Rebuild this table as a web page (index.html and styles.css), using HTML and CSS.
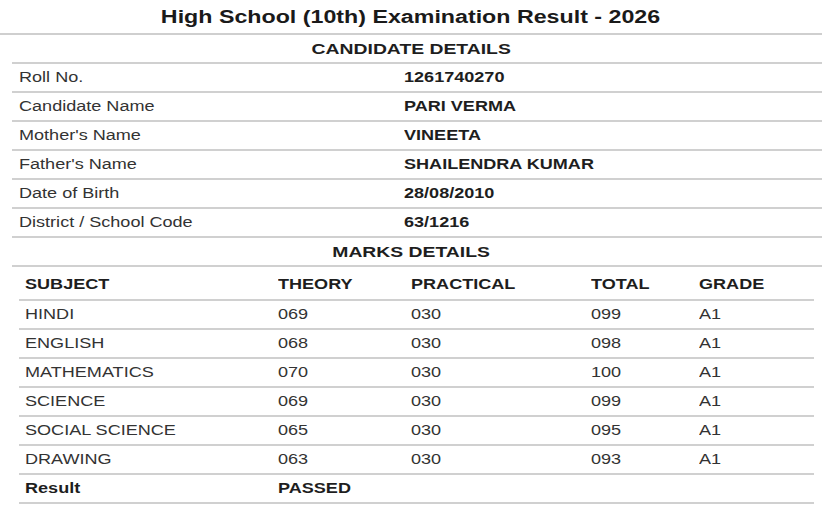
FILE: index.html
```html
<!DOCTYPE html>
<html>
<head>
<meta charset="utf-8">
<link rel="stylesheet" href="styles.css">
</head>
<body>
<h1 class="title"><span class="wide-c">High School (10th) Examination Result - 2026</span></h1>
<section class="cand">
  <div class="sec-head"><span class="wide-c">CANDIDATE DETAILS</span></div>
  <div class="crow"><span class="lbl">Roll No.</span><span class="val">1261740270</span></div>
  <div class="crow"><span class="lbl">Candidate Name</span><span class="val">PARI VERMA</span></div>
  <div class="crow"><span class="lbl">Mother's Name</span><span class="val">VINEETA</span></div>
  <div class="crow"><span class="lbl">Father's Name</span><span class="val">SHAILENDRA KUMAR</span></div>
  <div class="crow"><span class="lbl">Date of Birth</span><span class="val">28/08/2010</span></div>
  <div class="crow"><span class="lbl">District / School Code</span><span class="val">63/1216</span></div>
  <div class="sec-head"><span class="wide-c">MARKS DETAILS</span></div>
</section>
<section class="marks">
  <div class="mrow mhead"><span>SUBJECT</span><span>THEORY</span><span>PRACTICAL</span><span>TOTAL</span><span>GRADE</span></div>
  <div class="mrow"><span>HINDI</span><span>069</span><span>030</span><span>099</span><span>A1</span></div>
  <div class="mrow"><span>ENGLISH</span><span>068</span><span>030</span><span>098</span><span>A1</span></div>
  <div class="mrow"><span>MATHEMATICS</span><span>070</span><span>030</span><span>100</span><span>A1</span></div>
  <div class="mrow"><span>SCIENCE</span><span>069</span><span>030</span><span>099</span><span>A1</span></div>
  <div class="mrow"><span>SOCIAL SCIENCE</span><span>065</span><span>030</span><span>095</span><span>A1</span></div>
  <div class="mrow"><span>DRAWING</span><span>063</span><span>030</span><span>093</span><span>A1</span></div>
  <div class="mrow mresult"><span>Result</span><span>PASSED</span></div>
</section>
</body>
</html>
```

FILE: styles.css
```css
html, body {
  margin: 0;
  padding: 0;
  background: #ffffff;
}
body {
  font-family: "Liberation Sans", Arial, sans-serif;
  color: #262626;
  width: 822px;
  height: 508px;
  overflow: hidden;
}
.wide-c {
  display: inline-block;
  transform: scaleX(1.29);
  transform-origin: center;
}
.title {
  margin: 0;
  height: 33px;
  line-height: 34px;
  font-size: 18px;
  font-weight: bold;
  text-align: center;
  color: #1a1a1a;
  border-bottom: 2px solid #cfcfcf;
}
.cand {
  margin-left: 12px;
}
.sec-head {
  height: 27px;
  line-height: 27px;
  text-align: center;
  font-size: 15px;
  font-weight: bold;
  color: #1e1e1e;
  border-bottom: 2px solid #d0d0d0;
  padding-right: 12px;
}
.crow {
  display: grid;
  grid-template-columns: 385px 1fr;
  height: 27px;
  line-height: 27px;
  padding-left: 7px;
  font-size: 14px;
  border-bottom: 2px solid #d0d0d0;
}
.crow span,
.mrow span {
  justify-self: start;
  transform: scaleX(1.29);
  transform-origin: left center;
  white-space: nowrap;
}
.crow .lbl {
  color: #333333;
}
.crow .val {
  font-weight: bold;
  color: #1e1e1e;
}
.marks {
  margin-left: 19px;
  margin-right: 8px;
}
.mrow {
  display: grid;
  grid-template-columns: 253px 133px 180px 108px 1fr;
  height: 27px;
  line-height: 27px;
  padding-left: 6px;
  font-size: 14px;
  color: #333333;
  border-bottom: 2px solid #d0d0d0;
}
.mhead {
  height: 32px;
  line-height: 34px;
  font-weight: bold;
  color: #1e1e1e;
}
.mresult {
  font-weight: bold;
  color: #1e1e1e;
}
```
